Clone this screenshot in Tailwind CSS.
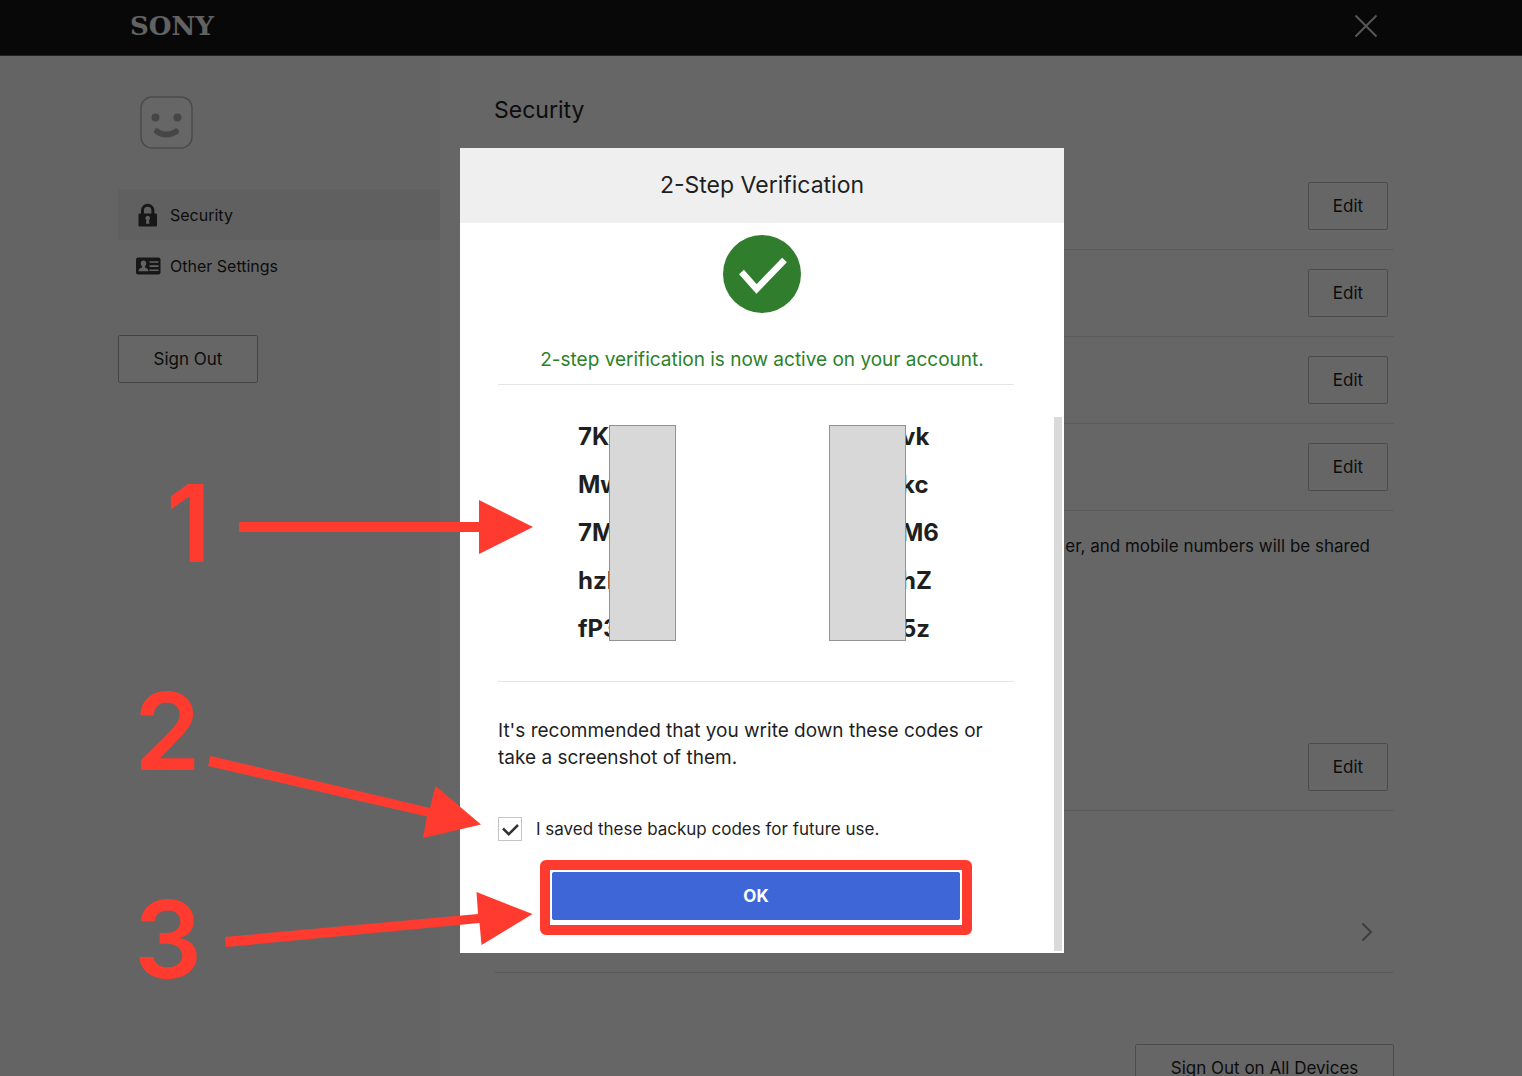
<!DOCTYPE html>
<html lang="en">
<head>
<meta charset="utf-8">
<meta name="viewport" content="width=device-width, initial-scale=1">
<title>Security - 2-Step Verification</title>
<script src="https://cdn.jsdelivr.net/npm/@tailwindcss/browser@4"></script>
</head>
<body class="flex h-screen flex-col overflow-hidden bg-white font-['Inter',sans-serif] text-[17px] text-[#1f1f1f]">

<header class="flex h-14 shrink-0 items-center justify-between border-b border-[#555] bg-[#141414] pr-36 pl-[130px] pb-1">
  <a href="#" class="font-['DejaVu_Serif',serif] text-[26px] leading-8 font-bold text-[#f4f4f4]">SONY</a>
  <button type="button" aria-label="Close" class="text-[#d8d8d8]">
    <svg class="size-6" viewBox="0 0 24 24" fill="none" stroke="currentColor" stroke-width="2"><path d="M1.500 1.500l21 21M22.500 1.500l-21 21"/></svg>
  </button>
</header>

<div class="grid min-h-0 flex-1 grid-cols-[440fr_1082fr] overflow-hidden">
  <aside class="bg-[#fafafa] pt-10 pl-[118px]">
    <svg class="ml-[22px] size-[53px]" viewBox="0 0 53 53" fill="none">
      <rect x="1" y="1" width="51" height="51" rx="11" fill="#fff" stroke="#bbb" stroke-width="1.500"/>
      <circle cx="15.500" cy="21.500" r="4" fill="#b0b0b0"/>
      <circle cx="37.500" cy="21.500" r="4" fill="#b0b0b0"/>
      <path d="M17 35.500c5 4 14 4 19 0" stroke="#b0b0b0" stroke-width="6" stroke-linecap="round"/>
    </svg>
    <nav class="mt-10 text-base">
      <a href="#" class="flex h-[51px] items-center gap-2 bg-[#efefef] pl-4">
        <svg class="size-7 shrink-0" viewBox="0 0 28 28" fill="none">
          <path d="M8.500 13V9.500a5.200 5.200 0 0 1 10.400 0V13" stroke="#3a3a3a" stroke-width="3"/>
          <rect x="4.500" y="12.500" width="18.500" height="13" rx="1.200" fill="#3a3a3a"/>
          <path d="M13.700 14.800a2.300 2.300 0 0 1 1.300 4.200l.5 3.800h-3.600l.5-3.800a2.300 2.300 0 0 1 1.300-4.200z" fill="#efefef"/>
        </svg>
        Security
      </a>
      <a href="#" class="flex h-[51px] items-center gap-2 pl-4">
        <svg class="size-7 shrink-0" viewBox="0 0 28 28">
          <rect x="2" y="5.500" width="24.500" height="17" rx="2" fill="#3a3a3a"/>
          <path fill="#fafafa" d="M9.500 8.500c1.700 0 2.700 1.200 2.700 2.900 0 1.200-.5 2.300-1.200 2.900v1.200c1.800.5 3.500 1.300 3.500 3.700h-10c0-2.400 1.700-3.200 3.500-3.700v-1.200c-.7-.6-1.200-1.700-1.200-2.900 0-1.700 1-2.900 2.700-2.900zM15.500 9.200h9v1.600h-9zM15.500 13.300h9v1.600h-9zM15.500 17.400h9v1.600h-9z"/>
        </svg>
        Other Settings
      </a>
    </nav>
    <button type="button" class="mt-11 h-12 w-[140px] rounded-xs border border-[#a8a8a8] bg-white pt-px">Sign Out</button>
  </aside>

  <main class="pr-8 pl-[54px]">
    <div class="max-w-[900px]">
      <h1 class="h-[107px] pt-9 text-[23px] leading-9">Security</h1>
      <div class="flex justify-end border-b border-[#e4e4e4] py-[19px] pr-1.5"><button type="button" class="h-12 w-20 rounded-xs border border-[#bbb] pt-px">Edit</button></div>
      <div class="flex justify-end border-b border-[#e4e4e4] py-[19px] pr-1.5"><button type="button" class="h-12 w-20 rounded-xs border border-[#bbb] pt-px">Edit</button></div>
      <div class="flex justify-end border-b border-[#e4e4e4] py-[19px] pr-1.5"><button type="button" class="h-12 w-20 rounded-xs border border-[#bbb] pt-px">Edit</button></div>
      <div class="flex justify-end border-b border-[#e4e4e4] py-[19px] pr-1.5"><button type="button" class="h-12 w-20 rounded-xs border border-[#bbb] pt-px">Edit</button></div>
      <p class="mb-[165px] pt-[22px] pr-6 text-right leading-[26px]">er, and mobile numbers will be shared</p>
      <div class="flex justify-end border-b border-[#e4e4e4] py-[19px] pr-1.5"><button type="button" class="h-12 w-20 rounded-xs border border-[#bbb] pt-px">Edit</button></div>
      <a href="#" aria-label="More" class="mt-20 flex h-[82px] items-center justify-end border-b border-[#e4e4e4] pr-[18px]">
        <svg class="size-5" viewBox="0 0 20 20" fill="none" stroke="#9a9a9a" stroke-width="2"><path d="M6.500 1.500l8.500 8.500-8.500 8.500"/></svg>
      </a>
      <div class="mt-[71px] flex justify-end"><button type="button" class="h-12 w-[259px] rounded-xs border border-[#bbb] pt-px">Sign Out on All Devices</button></div>
    </div>
  </main>
</div>

<div class="fixed inset-0 flex items-start justify-center bg-black/60 pt-[148px] pl-0.5">
  <div role="dialog" aria-labelledby="dialog-title" class="relative w-[604px] bg-white">
    <h2 id="dialog-title" class="flex h-[75px] items-center justify-center bg-[#efefef] text-[23px]">2-Step Verification</h2>
    <svg class="mx-auto mt-3 size-[78px]" viewBox="0 0 78 78" fill="none">
      <circle cx="39" cy="39" r="39" fill="#307d2e"/>
      <path d="M18.500 37l15 17L61.500 25" stroke="#fff" stroke-width="6.500"/>
    </svg>
    <p class="mt-[33px] text-center text-[19px] leading-7 text-[#2a822a]">2-step verification is now active on your account.</p>

    <div class="relative pt-2.5 pr-[50px] pb-[18px] pl-[38px]">
      <div class="absolute top-[43px] right-0.5 bottom-0.5 w-2 bg-[#dadada]"></div>
      <div class="relative grid grid-cols-[325px_1fr] border-y border-[#e5e5e5] py-7 text-2xl leading-[48px] font-bold">
        <ul class="pl-20">
          <li>7Ko</li>
          <li>Mw</li>
          <li>7M</li>
          <li>hzF</li>
          <li>fP3</li>
        </ul>
        <ul class="pl-[78px]">
          <li>vk</li>
          <li>kc</li>
          <li>M6</li>
          <li>hZ</li>
          <li>5z</li>
        </ul>
        <div class="absolute top-10 left-[111px] h-[216px] w-[67px] border border-[#929292] bg-[#d8d8d8]"></div>
        <div class="absolute top-10 left-[331px] h-[216px] w-[77px] border border-[#929292] bg-[#d8d8d8]"></div>
      </div>
      <p class="mt-[35px] text-[19px] leading-[27px]">It's recommended that you write down these codes or take a screenshot of them.</p>
      <div class="mt-[46px] flex items-center gap-3.5">
        <div class="relative size-6">
          <input id="saved" type="checkbox" checked class="peer block size-6 appearance-none border border-[#c4c4c4] bg-white">
          <svg class="pointer-events-none absolute inset-0 hidden size-6 peer-checked:block" viewBox="0 0 24 24" fill="none" stroke="#333" stroke-width="2.500"><path d="M5 11.500l5.700 5.700L20 8"/></svg>
        </div>
        <label for="saved" class="leading-6">I saved these backup codes for future use.</label>
      </div>
      <div class="mx-auto mt-[19px] w-[432px] rounded-md border-10 border-[#ff3b30] px-0.5 pt-0.5 pb-[5px]">
        <button type="button" class="block h-12 w-full rounded-xs bg-[#3f66d6] pt-px font-bold text-white">OK</button>
      </div>
    </div>

    <!-- Numbered callouts with arrows into the dialog -->
    <div class="pointer-events-none absolute top-0 -left-[326px] h-full w-[406px] text-[107px] leading-none font-semibold text-[#ff3b30]">
      <svg class="absolute top-0 right-0 h-[805px] w-[400px]" viewBox="0 0 400 805" fill="#ff3b30">
        <path d="M99 374h240v-22l54 27-54 27v-22H99z"/>
        <path d="M70.500 608l219.500 52 5.500-22 45.500 38.500-58 13.500 4-21.500L68 618z"/>
        <path d="M85 789l253-23-1.500-22 56 22-51 31-2-22L86 799z"/>
      </svg>
      <span class="absolute top-[322px] left-8">1</span>
      <span class="absolute top-[530px] left-0">2</span>
      <span class="absolute top-[738px] left-0">3</span>
    </div>
  </div>
</div>
</body>
</html>
